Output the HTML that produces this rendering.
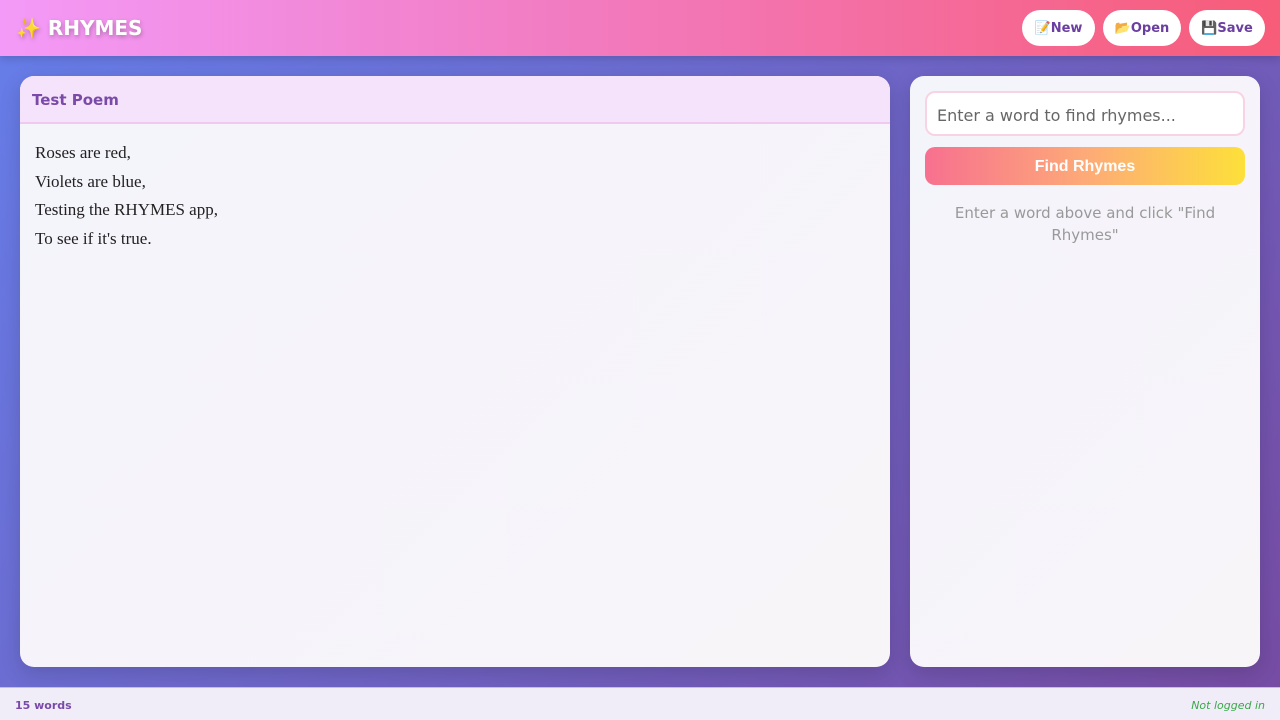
<!DOCTYPE html>
<html><head><meta charset="utf-8"><style>
*{box-sizing:border-box;margin:0;padding:0}
body{width:1280px;height:720px;overflow:hidden;font-family:"Comic Sans MS","DejaVu Sans","Liberation Sans",sans-serif;background:linear-gradient(135deg,#667eea 0%,#764ba2 100%);position:relative}
.hdr{position:absolute;left:0;top:0;width:1280px;height:56px;background:linear-gradient(90deg,#f39af8 0%,#f27bc0 45%,#f75c78 100%);box-shadow:0 3px 8px rgba(0,0,0,.15)}
.logo{position:absolute;left:16px;top:16px;color:#fff;font-size:20px;font-weight:bold;text-shadow:1px 2px 4px rgba(0,0,0,.25)}
.btn{position:absolute;top:10px;height:36px;background:#fff;border-radius:18px;color:#6b3fa0;font-weight:bold;font-size:13px;line-height:38px;text-align:center}
.card{position:absolute;background:linear-gradient(135deg,#f4f4fb,#f8f5f9);border-radius:14px;box-shadow:0 6px 20px rgba(0,0,0,.15);overflow:hidden}
.title{height:48px;background:#f5e3fb;border-bottom:2px solid #f0c8f0;padding:15px 12px;color:#7a4aa8;font-weight:bold;font-size:15px}
.poem{padding:15px 15px;font-family:"Liberation Serif",Georgia,serif;font-size:17px;line-height:28.7px;color:#222}
.inp{position:absolute;left:15px;top:15px;width:320px;height:45px;border:2px solid #f8d3e4;border-radius:10px;background:#fff;padding:13px 10px;color:#666;font-size:16px}
.find{position:absolute;left:15px;top:71px;width:320px;height:38px;border-radius:10px;background:linear-gradient(90deg,#f7708f,#fdaa78 50%,#fde03a);color:#fff;font-family:"Liberation Sans",Arial,sans-serif;font-weight:bold;font-size:16px;line-height:40px;text-align:center}
.hint{position:absolute;left:15px;top:126px;width:320px;text-align:center;color:#999;font-size:15px;line-height:22px}
.ftr{position:absolute;left:0;top:687px;width:1280px;height:33px;background:#f0edf8;border-top:1px solid #c9b8e8;font-size:11px;font-weight:bold}
</style></head><body>
<div class="hdr">
<div class="logo">✨ RHYMES</div>
<div class="btn" style="left:1022px;width:73px">📝New</div>
<div class="btn" style="left:1103px;width:78px">📂Open</div>
<div class="btn" style="left:1189px;width:76px">💾Save</div>
</div>
<div class="card" style="left:20px;top:76px;width:870px;height:591px">
<div class="title">Test Poem</div>
<div class="poem">Roses are red,<br>Violets are blue,<br>Testing the RHYMES app,<br>To see if it's true.</div>
</div>
<div class="card" style="left:910px;top:76px;width:350px;height:591px">
<div class="inp">Enter a word to find rhymes...</div>
<div class="find">Find Rhymes</div>
<div class="hint">Enter a word above and click "Find Rhymes"</div>
</div>
<div class="ftr">
<span style="position:absolute;left:15px;top:11px;color:#7a4aa8">15 words</span>
<span style="position:absolute;right:15px;top:11px;color:#3aa84a;font-style:italic;font-weight:normal">Not logged in</span>
</div>
</body></html>
